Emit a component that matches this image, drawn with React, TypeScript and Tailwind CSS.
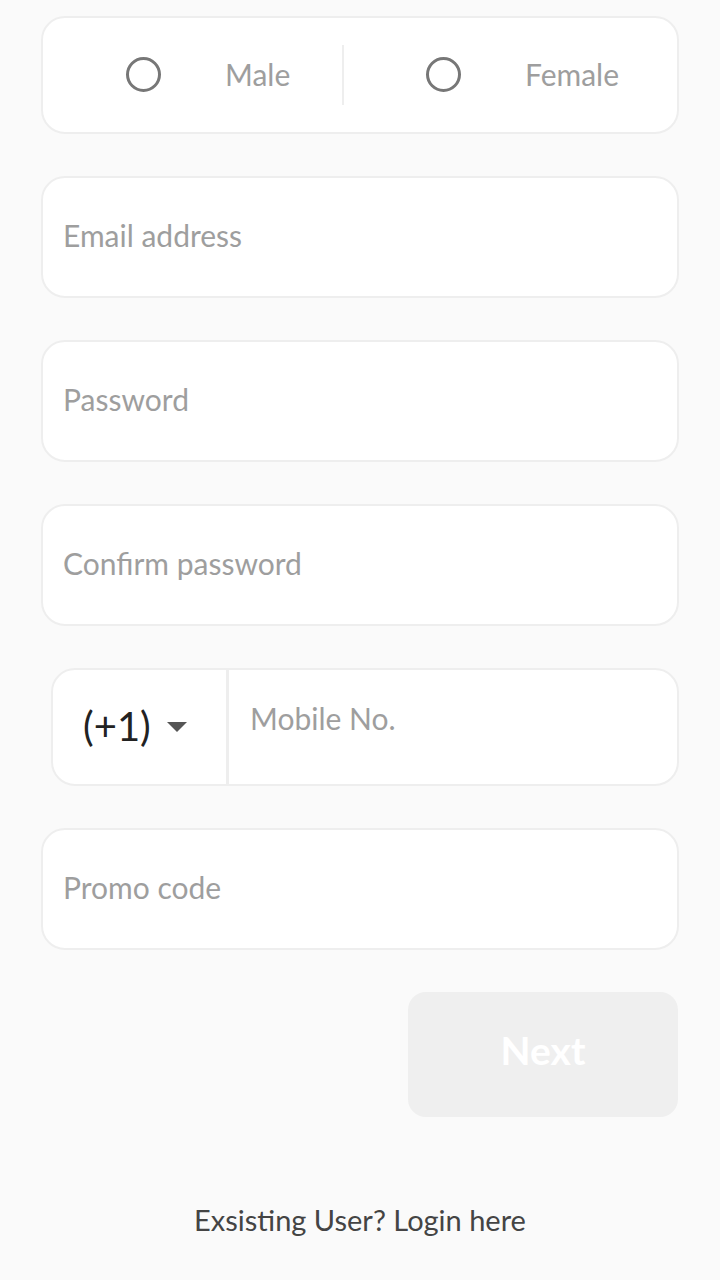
export default function App() {
  const font = { fontFamily: "Lato, 'Noto Sans', sans-serif" };
  return (
    <div className="min-h-[1280px] w-[720px] bg-[#fafafa]" style={font}>
      <div className="flex flex-col px-[41px] pt-[16px]">
        {/* Gender */}
        <div className="flex h-[118px] items-center rounded-[24px] border-2 border-[#eeeeee] bg-white">
          <div className="flex w-[299px] items-center pb-[2px] pl-[83px]">
            <span className="h-[35px] w-[35px] rounded-full border-[3px] border-[#777777]" />
            <span className="ml-[64px] text-[30px] text-[#9e9e9e]">Male</span>
          </div>
          <div className="h-[60px] w-[2px] bg-[#eeeeee]" />
          <div className="flex flex-1 items-center pb-[2px] pl-[82px]">
            <span className="h-[35px] w-[35px] rounded-full border-[3px] border-[#777777]" />
            <span className="ml-[64px] text-[30px] text-[#9e9e9e]">Female</span>
          </div>
        </div>

        <Field label="Email address" className="mt-[42px]" />
        <Field label="Password" className="mt-[42px]" />
        <Field label="Confirm password" className="mt-[42px]" />

        {/* Phone */}
        <div className="ml-[10px] mt-[42px] flex h-[118px] rounded-[24px] border-2 border-[#eeeeee] bg-white">
          <div className="flex w-[173px] items-center pb-[2px] pl-[30px]">
            <span className="text-[40px] text-[#222222]">(+1)</span>
            <svg width="20" height="10" viewBox="0 0 20 10" className="ml-[16px] mt-[2px]">
              <path d="M0 0 L20 0 L10 10 Z" fill="#555555" />
            </svg>
          </div>
          <div className="w-[3px] bg-[#eeeeee]" />
          <div className="flex flex-1 items-start pl-[21px] pt-[26px]">
            <span className="text-[30px] text-[#9e9e9e]">Mobile No.</span>
          </div>
        </div>

        <Field label="Promo code" className="mt-[42px]" />

        <div className="mt-[42px] flex justify-end">
          <button className="mr-[1px] flex h-[125px] w-[270px] items-center justify-center rounded-[18px] bg-[#efefef] pb-[8px] text-[39px] font-bold text-white">
            Next
          </button>
        </div>

        <div className="mt-[81px] text-center text-[29px] text-[#444444]">
          Exsisting User? Login here
        </div>
      </div>
    </div>
  );
}

function Field({ label, className }: { label: string; className?: string }) {
  return (
    <div
      className={`flex h-[122px] items-center rounded-[24px] border-2 border-[#eeeeee] bg-white pb-[4px] pl-[20px] ${className ?? ""}`}
    >
      <span className="text-[30px] text-[#9e9e9e]">{label}</span>
    </div>
  );
}
